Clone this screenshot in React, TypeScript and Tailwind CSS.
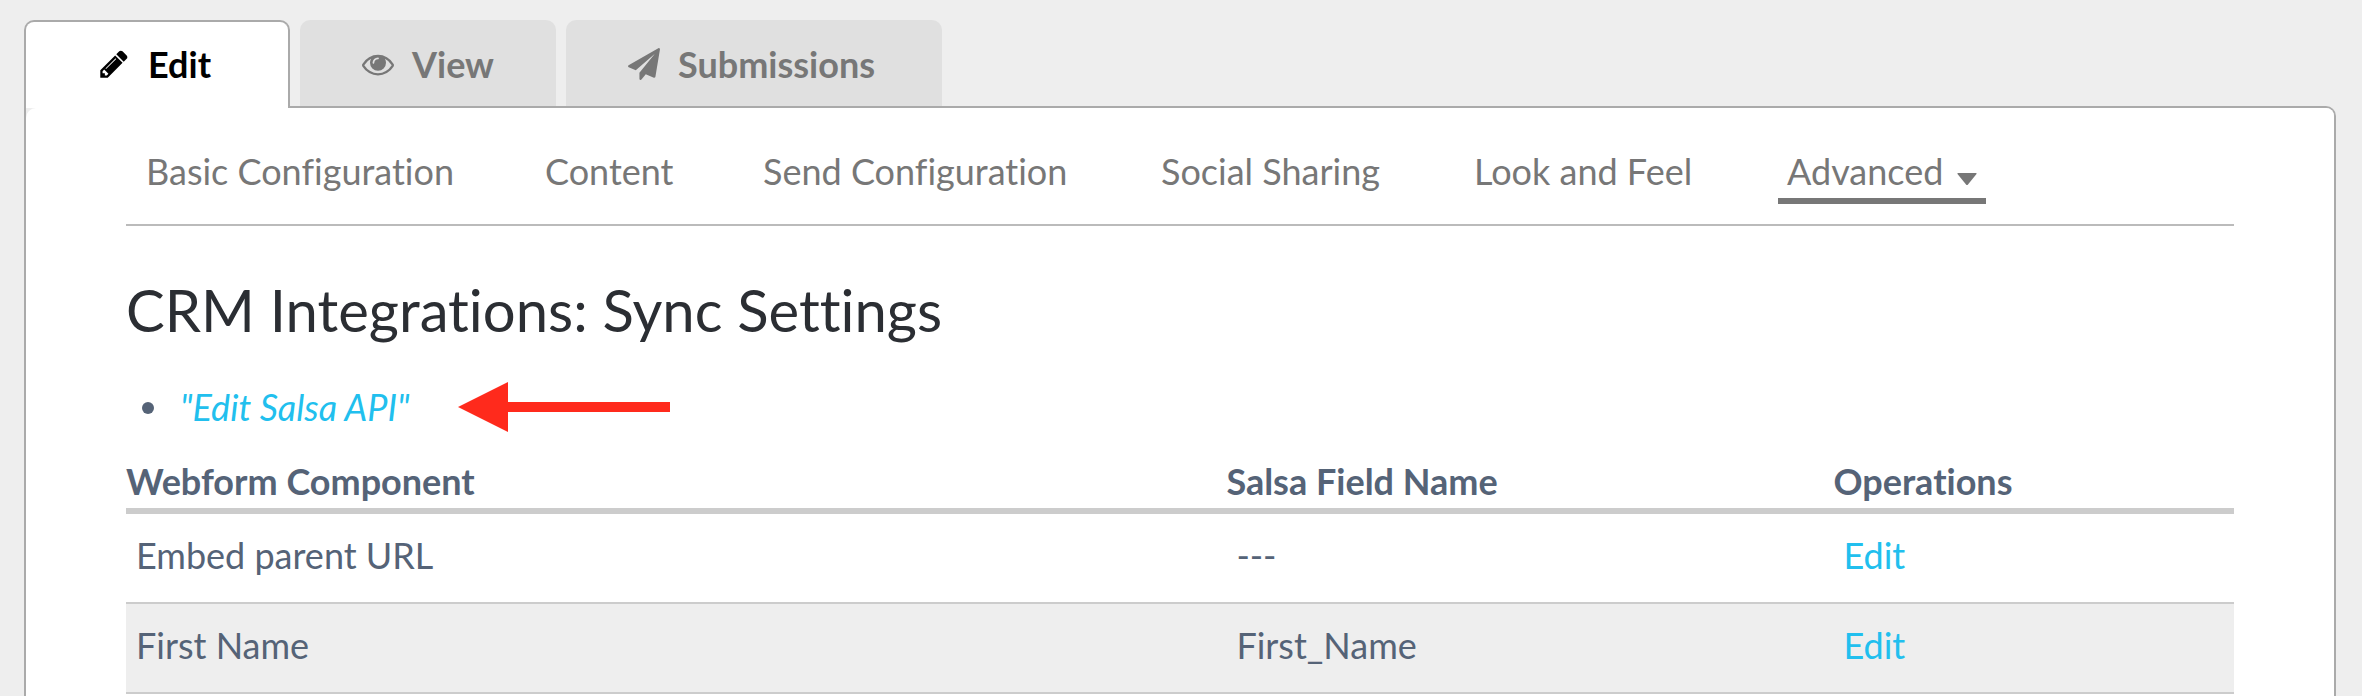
import type { ReactNode } from 'react';

type Row = { component: string; field: string };

const rows: Row[] = [
  { component: 'Embed parent URL', field: '---' },
  { component: 'First Name', field: 'First_Name' },
];

const sections = ['Basic Configuration', 'Content', 'Send Configuration', 'Social Sharing', 'Look and Feel'];

const PENCIL =
  'M491 1536l91-91-235-235-91 91v107h128v128h107zm523-928q0-22-22-22-10 0-17 7l-542 542q-7 7-7 17 0 22 22 22 10 0 17-7l542-542q7-7 7-17zm-54-192l416 416-832 832h-416v-416zm683 96q0 53-37 90l-166 166-416-416 166-165q36-38 90-38 53 0 91 38l235 234q37 39 37 91z';
const EYE =
  'M1664 960q-152-236-381-353 61 104 61 225 0 185-131.5 316.5t-316.5 131.5-316.5-131.5-131.5-316.5q0-121 61-225-229 117-381 353 133 205 333.5 326.5t434.5 121.5 434.5-121.5 333.5-326.5zm-720-384q0-20-14-34t-34-14q-125 0-214.5 89.5t-89.5 214.5q0 20 14 34t34 14 34-14 14-34q0-86 61-147t147-61q20 0 34-14t14-34zm848 384q0 34-20 69-140 230-376.5 368.5t-499.5 138.5-499.5-139-376.5-368q-20-35-20-69t20-69q140-229 376.5-368t499.5-139 499.5 139 376.5 368q20 35 20 69z';
const PLANE =
  'M1764 11q33 24 27 64l-256 1536q-5 29-32 45-14 8-31 8-11 0-24-5l-453-185-242 295q-18 23-49 23-13 0-22-4-19-7-30.5-23.5t-11.5-36.5v-349l864-1059-1069 925-395-162q-37-14-40-55-2-40 32-59l1664-960q15-9 32-9 20 0 36 11z';

const TabIcon = ({ path }: { path: string }) => (
  <svg viewBox="0 0 1792 1792" className="size-8 shrink-0" fill="currentColor" aria-hidden="true">
    <path d={path} />
  </svg>
);

const Tab = ({ className, icon, children }: { className: string; icon: string; children: ReactNode }) => (
  <a href="#" className={`flex h-[88px] items-center gap-[18px] rounded-t-[10px] leading-[40px] font-bold ${className}`}>
    <TabIcon path={icon} />
    {children}
  </a>
);

export default function App() {
  return (
    <div className="flex min-h-screen flex-col bg-[#eeeeee] pt-5 pr-[26px] pl-6 font-['Lato',sans-serif] text-[36px] text-[#556377] [font-variant-ligatures:none]">
      <nav aria-label="Webform" className="-mb-0.5 flex gap-2.5">
        <Tab icon={PENCIL} className="relative w-[266px] border-2 border-b-0 border-[#aaaaaa] bg-white pb-0.5 pl-[72px] text-black">
          Edit
        </Tab>
        <Tab icon={EYE} className="w-[256px] bg-[#e0e0e0] pl-[62px] text-[#777777]">
          View
        </Tab>
        <Tab icon={PLANE} className="w-[376px] bg-[#e0e0e0] pl-[62px] text-[#777777]">
          Submissions
        </Tab>
      </nav>

      <main className="flex flex-1 flex-col overflow-hidden rounded-tr-[10px] border-2 border-b-0 border-[#aaaaaa] bg-[#eeeeee]">
        <div className="flex-1 rounded-tl-[10px] bg-white px-[100px]">
          <nav
            aria-label="Edit sections"
            className="grid grid-cols-[399px_218px_398px_313px_312px_208px] justify-start border-b-2 border-[#bbbbbb] pt-[43px] pb-5 pl-3 leading-[40px] text-[#777777]"
          >
            {sections.map((label) => (
              <a key={label} href="#" className="justify-self-start px-2">
                {label}
              </a>
            ))}
            <a href="#" className="flex items-center justify-between border-b-[6px] border-[#777777] px-[9px] pb-[7px]">
              Advanced
              <svg viewBox="0 0 20 12" className="mt-4 h-3 w-5" fill="currentColor" aria-hidden="true">
                <path d="M1 0h18q1 0 .5 1L11 11.5q-1 1-2 0L.5 1Q0 0 1 0z" />
              </svg>
            </a>
          </nav>

          <h1 className="mt-[50px] text-[58px] leading-[68px] text-[#2b2e33]">CRM Integrations: Sync Settings</h1>

          <ul className="mt-[43px] pl-4 leading-[40px]">
            <li className="flex items-center gap-[26px]">
              <span className="mt-0.5 size-3 rounded-full bg-[#556377]" />
              <div className="flex items-center gap-8">
                <a href="#" className="min-w-[246px] text-[#21bfee] italic">
                  "Edit Salsa API"
                </a>
                <svg viewBox="0 0 212 50" className="-my-[5px] h-[50px] w-[212px]" fill="#ff2a1c" aria-hidden="true">
                  <path d="M0 25L50 0v20h162v10H50v20z" />
                </svg>
              </div>
            </li>
          </ul>

          <table className="mt-[34px] w-full table-fixed border-collapse text-left leading-[40px]">
            <thead>
              <tr className="border-b-[6px] border-[#cccccc]">
                <th className="w-[52.2%] pb-[7px] font-bold">Webform Component</th>
                <th className="w-[28.8%] pb-[7px] font-bold">Salsa Field Name</th>
                <th className="pb-[7px] font-bold">Operations</th>
              </tr>
            </thead>
            <tbody>
              {rows.map((row) => (
                <tr key={row.component} className="border-b-2 border-[#cccccc] even:bg-[#eeeeee]">
                  <td className="px-2.5 pt-[21px] pb-[27px]">{row.component}</td>
                  <td className="px-2.5 pt-[21px] pb-[27px]">{row.field}</td>
                  <td className="px-2.5 pt-[21px] pb-[27px]">
                    <a href="#" className="text-[#21bfee]">
                      Edit
                    </a>
                  </td>
                </tr>
              ))}
            </tbody>
          </table>
        </div>
      </main>
    </div>
  );
}
